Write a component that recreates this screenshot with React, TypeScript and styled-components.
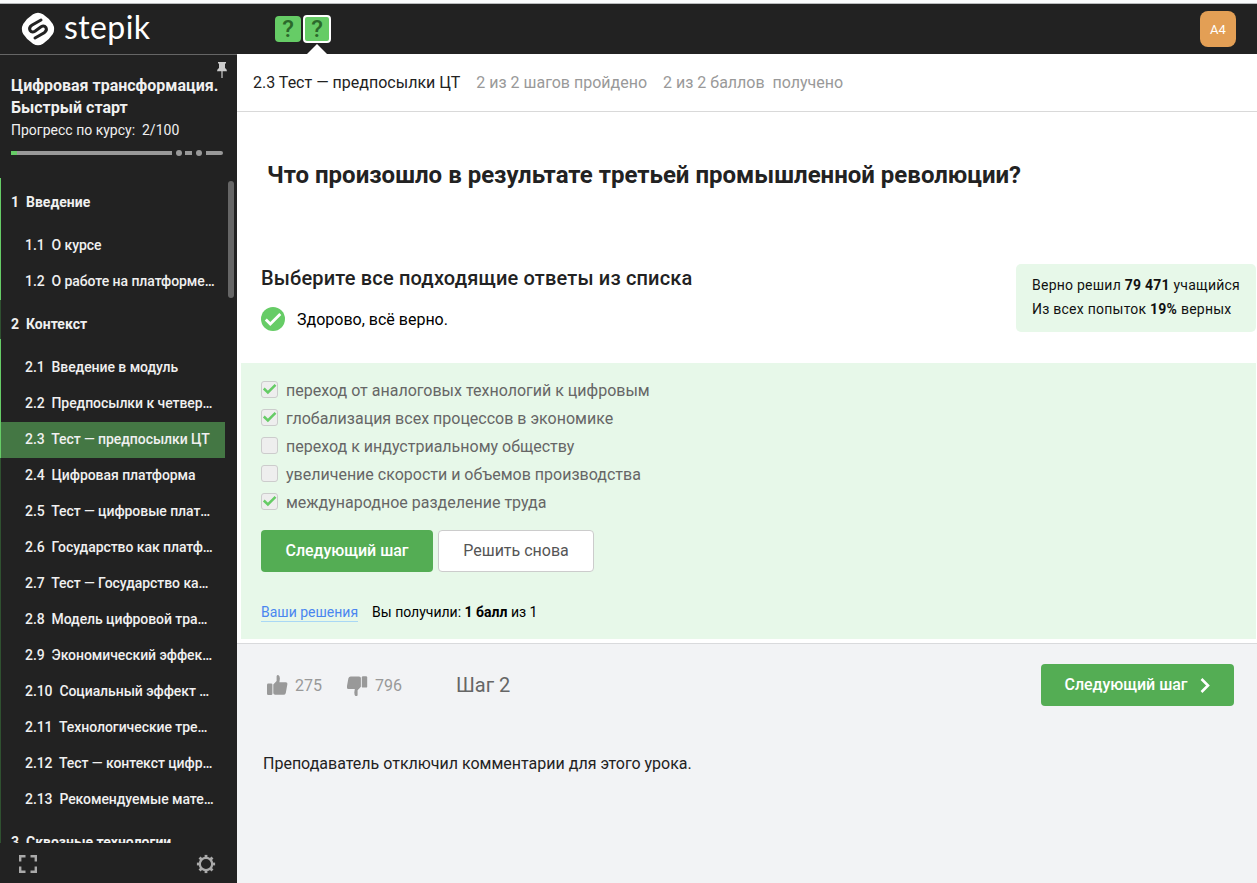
import React from "react";
import styled, { createGlobalStyle } from "styled-components";

const GlobalStyle = createGlobalStyle`
  * { box-sizing: border-box; }
  html, body { margin: 0; padding: 0; }
  body {
    font-family: Roboto, "Liberation Sans", sans-serif;
    background: #fff;
    color: #222;
    overflow: hidden;
  }
`;

const Page = styled.div`
  display: flex;
  flex-direction: column;
  width: 1257px;
  height: 883px;
`;

const WindowEdge = styled.div`
  flex: none;
  height: 4px;
  background: #fbfcfd;
  border-bottom: 1px solid #b9bbbd;
`;

const Header = styled.header`
  flex: none;
  display: flex;
  align-items: center;
  height: 50px;
  padding: 0 21px;
  background: #222;
`;

const Brand = styled.a`
  display: flex;
  align-items: center;
  gap: 9px;
  width: 254px;
  color: #fff;
`;

const Wordmark = styled.span`
  font: 400 32px/40px Lato, sans-serif;
  letter-spacing: 0.4px;
  padding-bottom: 5px;
`;

const Steps = styled.nav`
  display: flex;
  align-self: stretch;
  align-items: center;
  gap: 2px;
  flex: 1;
`;

const Step = styled.span<{ $current?: boolean }>`
  position: relative;
  display: flex;
  align-items: center;
  justify-content: center;
  width: ${(p) => (p.$current ? 28 : 26)}px;
  height: ${(p) => (p.$current ? 28 : 26)}px;
  border: ${(p) => (p.$current ? "2px solid #fff" : "0")};
  border-radius: 4px;
  background: #66cc66;
  color: #2b692b;
  font-size: 24px;
  line-height: 26px;
  font-weight: 500;
`;

const StepPointer = styled.i`
  position: absolute;
  left: 2px;
  top: 27px;
  border: 10px solid transparent;
  border-top: 0;
  border-bottom-color: #fff;
`;

const Avatar = styled.span`
  display: flex;
  align-items: center;
  justify-content: center;
  width: 36px;
  height: 36px;
  border-radius: 8px;
  background: #e39f55;
  color: #fff;
  font-size: 13px;
`;

const Body = styled.div`
  flex: 1;
  min-height: 0;
  display: flex;
`;

const Sidebar = styled.aside`
  flex: none;
  display: flex;
  flex-direction: column;
  width: 237px;
  border-top: 1px solid #666;
  background: #222;
  color: #f0f0f0;
`;

const Course = styled.div`
  flex: none;
  position: relative;
  height: 123px;
  padding: 20px 11px 0;
`;

const Pin = styled.svg`
  position: absolute;
  left: 217px;
  top: 7px;
`;

const CourseTitle = styled.div`
  font-size: 16px;
  line-height: 22px;
  font-weight: 700;
  white-space: nowrap;
`;

const CourseProgress = styled.div`
  font-size: 14px;
  line-height: 22px;
  white-space: pre;
`;

const Track = styled.div`
  display: flex;
  align-items: center;
  width: 212px;
  height: 6px;
  margin-top: 9px;
`;

const Segment = styled.i<{ $w: number; $gap?: number; $done?: boolean; $dot?: boolean }>`
  flex: none;
  width: ${(p) => p.$w}px;
  height: ${(p) => (p.$dot ? 6 : 4)}px;
  margin-left: ${(p) => p.$gap ?? 0}px;
  border-radius: ${(p) => (p.$dot ? "50%" : "0")};
  background: ${(p) => (p.$done ? "#66cc66" : "#999")};
  &:last-child { border-radius: 0 2px 2px 0; }
`;

const Contents = styled.div`
  flex: none;
  display: flex;
  justify-content: space-between;
  height: 665px;
  overflow: hidden;
`;

const Lessons = styled.div`
  width: 225px;
`;

const Group = styled.div<{ $done?: boolean }>`
  height: 39px;
  padding-left: 10px;
  border-left: 1px solid ${(p) => (p.$done ? "#66cc66" : "#2f5130")};
  font-size: 14px;
  line-height: 48px;
  font-weight: 700;
  white-space: pre;
`;

const Lesson = styled.div<{ $done?: boolean; $active?: boolean; $first?: boolean }>`
  height: ${(p) => (p.$first ? 47 : 36)}px;
  padding: ${(p) => (p.$first ? 11 : 0)}px 0 0 24px;
  border-left: 1px solid ${(p) => (p.$done ? "#66cc66" : "#2f5130")};
  background: ${(p) => (p.$active ? "#447744" : "transparent")};
  font-size: 14px;
  line-height: 34px;
  font-weight: 500;
  letter-spacing: -0.06px;
  white-space: pre;
`;

const Scrollbar = styled.div`
  width: 6px;
  height: 117px;
  margin: 3px 3px 0 0;
  border-radius: 3px;
  background: #666;
`;

const SidebarTools = styled.div`
  flex: 1;
  display: flex;
  align-items: center;
  justify-content: space-between;
  padding: 2px 21px 0 19px;
`;

const Main = styled.main`
  flex: 1;
  display: flex;
  flex-direction: column;
  min-width: 0;
`;

const LessonBar = styled.div`
  flex: none;
  display: flex;
  height: 58px;
  padding-left: 16px;
  border-bottom: 1px solid #d9d9d9;
  font-size: 16px;
  line-height: 57px;
  white-space: pre;
`;

const Muted = styled.span<{ $gap: number }>`
  margin-left: ${(p) => p.$gap}px;
  color: #999;
`;

const Question = styled.h2`
  flex: none;
  height: 152px;
  margin: 0;
  padding: 48px 0 0 30px;
  font-size: 24px;
  line-height: 30px;
  font-weight: 700;
`;

const Summary = styled.div`
  flex: none;
  display: flex;
  justify-content: space-between;
  height: 99px;
  padding: 0 1px 0 24px;
`;

const Prompt = styled.div`
  font-size: 20px;
  line-height: 28px;
  font-weight: 500;
  letter-spacing: 0.17px;
`;

const Verdict = styled.div`
  display: flex;
  align-items: center;
  gap: 12px;
  margin-top: 14px;
  color: #000;
  font-size: 16px;
  line-height: 24px;
  span { padding-top: 2px; }
`;

const Stats = styled.div`
  width: 240px;
  height: 68px;
  padding: 9px 0 0 16px;
  border-radius: 5px;
  background: #e7f8e9;
  color: #111;
  font-size: 14px;
  line-height: 24px;
  letter-spacing: 0.24px;
  white-space: nowrap;
  b { font-weight: 700; }
`;

const Quiz = styled.section`
  flex: none;
  height: 276px;
  margin: 0 1px 4px 4px;
  padding: 13px 20px 0;
  background: #e7f8e9;
`;

const Option = styled.div`
  display: flex;
  align-items: center;
  gap: 8px;
  height: 28px;
  color: #666;
  font-size: 16px;
`;

const Box = styled.span`
  display: flex;
  width: 17px;
  height: 17px;
  margin-top: -2px;
  border: 1px solid #ccc;
  border-radius: 3px;
  background: #eee;
`;

const Buttons = styled.div`
  display: flex;
  gap: 5px;
  margin-top: 14px;
`;

const Button = styled.button<{ $w: number; $plain?: boolean }>`
  display: flex;
  align-items: center;
  justify-content: center;
  gap: 13px;
  width: ${(p) => p.$w}px;
  height: 42px;
  padding: 0 0 2px;
  border: ${(p) => (p.$plain ? "1px solid #ccc" : "0")};
  border-radius: 4px;
  background: ${(p) => (p.$plain ? "#fff" : "#54ad54")};
  color: ${(p) => (p.$plain ? "#555" : "#fff")};
  font-family: inherit;
  font-size: 16px;
  font-weight: ${(p) => (p.$plain ? 400 : 500)};
  letter-spacing: ${(p) => (p.$plain ? 0 : -0.05)}px;
  svg { margin-top: 2px; }
`;

const Score = styled.div`
  display: flex;
  gap: 14px;
  margin-top: 31px;
  color: #000;
  font-size: 14px;
  line-height: 18px;
`;

const Solutions = styled.a`
  color: #4a86f0;
  border-bottom: 1px solid #a9d8f5;
`;

const Footer = styled.footer`
  flex: 1;
  border-top: 1px solid #d9dadc;
  background: #f2f3f5;
  padding: 20px 23px 0 30px;
`;

const Actions = styled.div`
  display: flex;
  align-items: center;
  height: 42px;
  color: #999;
  font-size: 16px;
`;

const Vote = styled.span`
  display: flex;
  align-items: center;
  gap: 7px;
  width: 80px;
`;

const StepName = styled.span`
  flex: 1;
  margin-left: 29px;
  color: #666;
  font-size: 20px;
`;

const Notice = styled.p`
  margin: 48px 0 0 -4px;
  font-size: 16px;
  line-height: 20px;
`;

const Check = ({ size, color }: { size: number; color: string }) => (
  <svg width={size} height={size} viewBox="0 0 15 15" fill="none">
    <path d="M1.8 6.5 5.9 10.4 13.5 2.8" stroke={color} strokeWidth="2.5" />
  </svg>
);

const Thumb = ({ down }: { down?: boolean }) => (
  <svg width="21" height="22" viewBox="0 0 21 22" fill="#999">
    <g transform={down ? "rotate(180 10.1 11.3)" : "translate(0 .6)"}>
      <rect x="0" y="9" width="5.4" height="11.3" rx="1.2" />
      <path d="M6.3 9.8 9.6 6.4V1.6Q9.8 .2 11.2.3 12.9.9 12.9 4L12.4 7.6H18.8Q20.6 7.7 20.4 9.4L18.8 18.3Q18.3 20.2 16.5 20.2H8.2Q6.3 20.2 6.3 18.5Z" />
    </g>
  </svg>
);

const gearTeeth = [0, 45, 90, 135, 180, 225, 270, 315];

const lessons = [
  ["2.1", "Введение в модуль"],
  ["2.2", "Предпосылки к четвер…"],
  ["2.3", "Тест — предпосылки ЦТ"],
  ["2.4", "Цифровая платформа"],
  ["2.5", "Тест — цифровые плат…"],
  ["2.6", "Государство как платф…"],
  ["2.7", "Тест — Государство ка…"],
  ["2.8", "Модель цифровой тра…"],
  ["2.9", "Экономический эффек…"],
  ["2.10", "Социальный эффект …"],
  ["2.11", "Технологические тре…"],
  ["2.12", "Тест — контекст цифр…"],
  ["2.13", "Рекомендуемые мате…"],
];

const options: [string, boolean][] = [
  ["переход от аналоговых технологий к цифровым", true],
  ["глобализация всех процессов в экономике", true],
  ["переход к индустриальному обществу", false],
  ["увеличение скорости и объемов производства", false],
  ["международное разделение труда", true],
];

export default function App() {
  return (
    <Page>
      <GlobalStyle />
      <WindowEdge />
      <Header>
        <Brand>
          <svg width="34" height="34" viewBox="0 0 34 34" fill="none">
            <path d="M12 2.200Q17-.8 22 2.200 28 6 31.800 12 34.500 17 31.800 22 28 28 22 31.800 17 34.800 12 31.800 6 28 2.200 22-.5 17 2.200 12 6 6 12 2.200Z" fill="#fff" />
            <path d="M20 8 10.800 13.300Q7.600 15.500 9 18.300 10.800 21 14 19.300L20 14.700Q23.200 13 25 15.700 26.400 18.500 23.200 20.700L14 26" stroke="#222" strokeWidth="3" strokeLinecap="round" />
          </svg>
          <Wordmark>stepik</Wordmark>
        </Brand>
        <Steps>
          <Step>?</Step>
          <Step $current>?<StepPointer /></Step>
        </Steps>
        <Avatar>A4</Avatar>
      </Header>
      <Body>
        <Sidebar>
          <Course>
            <Pin width="10" height="16" viewBox="0 0 10 16" fill="#ccc">
              <path d="M1 0H9V1.6H8V6Q9.8 7 10 9.2H5.6V16H4.4V9.2H0Q.2 7 2 6V1.6H1Z" />
            </Pin>
            <CourseTitle>Цифровая трансформация.<br />Быстрый старт</CourseTitle>
            <CourseProgress>Прогресс по курсу:  2/100</CourseProgress>
            <Track>
              <Segment $w={6} $done />
              <Segment $w={155} />
              <Segment $w={6} $gap={4} $dot />
              <Segment $w={7} $gap={3} />
              <Segment $w={6} $gap={4} $dot />
              <Segment $w={17} $gap={4} />
            </Track>
          </Course>
          <Contents>
            <Lessons>
              <Group $done>1  Введение</Group>
              <Lesson $done $first>1.1  О курсе</Lesson>
              <Lesson $done>1.2  О работе на платформе…</Lesson>
              <Group>2  Контекст</Group>
              {lessons.map(([n, title], i) => (
                <Lesson key={n} $done={i < 3} $active={i === 2} $first={i === 0}>{n}  {title}</Lesson>
              ))}
              <Group>3  Сквозные технологии</Group>
            </Lessons>
            <Scrollbar />
          </Contents>
          <SidebarTools>
            <svg width="18" height="18" viewBox="0 0 18 18" fill="none" stroke="#aaa" strokeWidth="2.4">
              <path d="M1.2 6.5V1.2H6.5M11.5 1.2H16.8V6.5M16.8 11.5V16.8H11.5M6.5 16.8H1.2V11.5" />
            </svg>
            <svg width="20" height="20" viewBox="0 0 20 20" fill="none" stroke="#aaa">
              <circle cx="10" cy="10" r="6.2" strokeWidth="2.3" />
              {gearTeeth.map((a) => (
                <path key={a} d="M10 3.6V.9" strokeWidth="2.8" transform={`rotate(${a} 10 10)`} />
              ))}
            </svg>
          </SidebarTools>
        </Sidebar>
        <Main>
          <LessonBar>
            2.3 Тест — предпосылки ЦТ
            <Muted $gap={16}>2 из 2 шагов пройдено</Muted>
            <Muted $gap={16}>2 из 2 баллов  получено</Muted>
          </LessonBar>
          <Question>Что произошло в результате третьей промышленной революции?</Question>
          <Summary>
            <div>
              <Prompt>Выберите все подходящие ответы из списка</Prompt>
              <Verdict>
                <svg width="24" height="24" viewBox="0 0 24 24" fill="none">
                  <circle cx="12" cy="12" r="12" fill="#66cc66" />
                  <path d="M4.8 12.5 9.3 17 19.3 7" stroke="#fff" strokeWidth="2.8" />
                </svg>
                <span>Здорово, всё верно.</span>
              </Verdict>
            </div>
            <Stats>
              <div>Верно решил <b>79 471</b> учащийся</div>
              <div>Из всех попыток <b>19%</b> верных</div>
            </Stats>
          </Summary>
          <Quiz>
            {options.map(([text, checked]) => (
              <Option key={text}>
                <Box>{checked && <Check size={15} color="#66cc66" />}</Box>
                {text}
              </Option>
            ))}
            <Buttons>
              <Button $w={172}>Следующий шаг</Button>
              <Button $w={156} $plain>Решить снова</Button>
            </Buttons>
            <Score>
              <Solutions>Ваши решения</Solutions>
              <span>Вы получили: <b>1 балл</b> из 1</span>
            </Score>
          </Quiz>
          <Footer>
            <Actions>
              <Vote><Thumb />275</Vote>
              <Vote><Thumb down />796</Vote>
              <StepName>Шаг 2</StepName>
              <Button $w={193}>
                Следующий шаг
                <svg width="10" height="15" viewBox="0 0 10 15" fill="none">
                  <path d="M1.5 1 8 7.5 1.5 14" stroke="#fff" strokeWidth="2.6" />
                </svg>
              </Button>
            </Actions>
            <Notice>Преподаватель отключил комментарии для этого урока.</Notice>
          </Footer>
        </Main>
      </Body>
    </Page>
  );
}
